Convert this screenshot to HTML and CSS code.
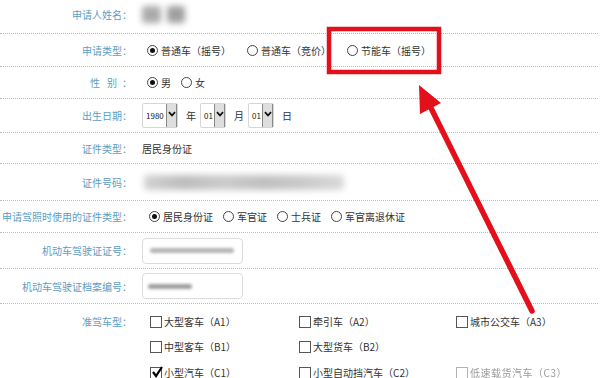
FILE: index.html
```html
<!DOCTYPE html>
<html lang="zh-CN">
<head>
<meta charset="utf-8">
<link rel="stylesheet" href="styles.css">
</head>
<body>
<div class="form">
  <div class="row h1">
    <div class="lbl">申请人姓名：</div>
    <div class="val"><span class="blob b-name1"></span><span class="blob b-name2"></span></div>
  </div>
  <div class="row h2">
    <div class="lbl">申请类型：</div>
    <div class="val radios wide">
      <span class="radio on"><i></i>普通车（摇号）</span>
      <span class="radio"><i></i>普通车（竞价）</span>
      <span class="radio"><i></i>节能车（摇号）</span>
    </div>
  </div>
  <div class="row h3">
    <div class="lbl"><span class="gap">性</span><span class="gap2">别</span>：</div>
    <div class="val radios">
      <span class="radio on"><i></i>男</span>
      <span class="radio"><i></i>女</span>
    </div>
  </div>
  <div class="row h4">
    <div class="lbl">出生日期：</div>
    <div class="val">
      <span class="sel w36"><span class="sv">1980</span><span class="arr"><svg viewBox="0 0 10 8" width="8" height="6"><polyline points="1,1.5 5,6 9,1.5" fill="none" stroke="#111" stroke-width="2.4"/></svg></span></span>
      <span class="unit">年</span>
      <span class="sel w26"><span class="sv">01</span><span class="arr"><svg viewBox="0 0 10 8" width="8" height="6"><polyline points="1,1.5 5,6 9,1.5" fill="none" stroke="#111" stroke-width="2.4"/></svg></span></span>
      <span class="unit">月</span>
      <span class="sel w26"><span class="sv">01</span><span class="arr"><svg viewBox="0 0 10 8" width="8" height="6"><polyline points="1,1.5 5,6 9,1.5" fill="none" stroke="#111" stroke-width="2.4"/></svg></span></span>
      <span class="unit">日</span>
    </div>
  </div>
  <div class="row h5">
    <div class="lbl">证件类型：</div>
    <div class="val">居民身份证</div>
  </div>
  <div class="row h6">
    <div class="lbl">证件号码：</div>
    <div class="val"><span class="blob b-id"></span></div>
  </div>
  <div class="row h7">
    <div class="lbl">申请驾照时使用的证件类型：</div>
    <div class="val radios lic">
      <span class="radio on"><i></i>居民身份证</span>
      <span class="radio"><i></i>军官证</span>
      <span class="radio"><i></i>士兵证</span>
      <span class="radio"><i></i>军官离退休证</span>
    </div>
  </div>
  <div class="row h8">
    <div class="lbl">机动车驾驶证证号：</div>
    <div class="val"><span class="inp"><span class="blob b-in1"></span></span></div>
  </div>
  <div class="row h9">
    <div class="lbl">机动车驾驶证档案编号：</div>
    <div class="val"><span class="inp"><span class="blob b-in2"></span></span></div>
  </div>
  <div class="row last">
    <div class="lbl">准驾车型：</div>
    <div class="val">
      <div class="cbgrid">
        <span class="cb"><i></i>大型客车（A1）</span>
        <span class="cb"><i></i>牵引车（A2）</span>
        <span class="cb"><i></i>城市公交车（A3）</span>
        <span class="cb"><i></i>中型客车（B1）</span>
        <span class="cb"><i></i>大型货车（B2）</span>
        <span class="cb"></span>
        <span class="cb on"><i><svg viewBox="0 0 12 12" width="12" height="12"><polyline points="2,6 5,10 11,1" fill="none" stroke="#000" stroke-width="2.2"/></svg></i>小型汽车（C1）</span>
        <span class="cb"><i></i>小型自动挡汽车（C2）</span>
        <span class="cb faded"><i></i>低速载货汽车（C3）</span>
      </div>
    </div>
  </div>
</div>
<svg class="overlay" width="600" height="378" viewBox="0 0 600 378">
  <rect x="329" y="29" width="110" height="43" fill="none" stroke="#e3101b" stroke-width="4.5"/>
  <line x1="532" y1="311" x2="428" y2="102" stroke="#e3101b" stroke-width="5.5" stroke-linecap="round"/>
  <polygon points="419,85 441,103 420,114" fill="#e3101b"/>
</svg>
</body>
</html>
```

FILE: styles.css
```css
* { box-sizing: border-box; margin: 0; padding: 0; }
html, body { width: 600px; height: 378px; overflow: hidden; background: #fff; }
body {
  font-family: "Noto Sans CJK SC", "Noto Sans", sans-serif;
  font-size: 10px;
  color: #333;
  position: relative;
}
.form { width: 598px; }
.row {
  display: flex;
  align-items: center;
  border-bottom: 1px dotted #bdbdbd;
}
.h1 { height: 34px; padding-bottom: 5px; }
.h2 { height: 33px; }
.h3 { height: 32px; }
.h4 { height: 34px; }
.h5 { height: 31px; }
.h6 { height: 37px; }
.h7 { height: 32px; }
.h8 { height: 36px; }
.h9 { height: 35px; }
.last { align-items: flex-start; border-bottom: none; padding-top: 5px; }
.lbl {
  width: 132px;
  flex: none;
  text-align: right;
  color: #5a9ec4;
  line-height: 25px;
}
.lbl .gap { margin-right: 7px; }
.lbl .gap2 { margin-right: 5px; }
.val {
  padding-left: 10px;
  display: flex;
  align-items: center;
}
.radios { padding-left: 15px; }
.radios.lic { padding-left: 17px; }
.radio {
  display: inline-flex;
  align-items: center;
  margin-right: 10px;
}
.radios.wide .radio { margin-right: 16px; }
.radio i {
  width: 11px;
  height: 11px;
  border: 1px solid #444;
  border-radius: 50%;
  margin-right: 3px;
  position: relative;
  flex: none;
}
.radio.on i::after {
  content: "";
  position: absolute;
  left: 2px;
  top: 2px;
  width: 5px;
  height: 5px;
  background: #111;
  border-radius: 50%;
}
.sel {
  display: inline-flex;
  align-items: stretch;
  height: 25px;
  border: 1px solid #d6d6d6;
  border-radius: 2px;
}
.w36 { width: 36px; }
.w26 { width: 26px; }
.sv {
  flex: 1;
  font-size: 8px;
  line-height: 23px;
  padding-left: 3px;
  color: #222;
}
.arr {
  width: 11px;
  background: #dedede;
  border-left: 1px solid #8a8a8a;
  border-right: 1px solid #8a8a8a;
  display: flex;
  justify-content: center;
  padding-top: 7px;
}
.unit { margin: 0 4px 0 8px; }
.blob {
  display: inline-block;
  filter: blur(3px);
  border-radius: 3px;
}
.b-name1 { width: 19px; height: 17px; background: #ababab; }
.b-name2 { width: 18px; height: 17px; background: #a0a0a0; margin-left: 6px; }
.b-id {
  width: 200px;
  height: 15px;
  background: linear-gradient(90deg, #d2d2d2 0%, #bdbdbd 20%, #cbcbcb 40%, #c0c0c0 60%, #cacaca 80%, #dadada 100%);
  margin-left: 2px;
}
.inp {
  width: 101px;
  height: 26px;
  border: 1px solid #dcdcdc;
  border-radius: 4px;
  display: flex;
  align-items: center;
  padding-left: 7px;
}
.b-in1 { width: 84px; height: 5px; background: #b4b4b4; filter: blur(1.8px); }
.b-in2 { width: 44px; height: 5px; background: #9e9e9e; filter: blur(1.8px); margin-left: -2px; }
.cbgrid {
  display: grid;
  grid-template-columns: 149px 157px 140px;
  grid-auto-rows: 25.5px;
  margin-left: 8px;
}
.cb {
  display: inline-flex;
  align-items: center;
  white-space: nowrap;
  line-height: 1;
}
.cb i {
  width: 12px;
  height: 12px;
  border: 1px solid #555;
  margin-right: 2px;
  position: relative;
  flex: none;
}
.cb.on i svg { position: absolute; left: 0; top: -2px; }
.cb.faded { color: #777; filter: blur(0.5px); opacity: 0.75; letter-spacing: 0.5px; }
.cb.faded i { border-color: #999; }
.overlay { position: absolute; left: 0; top: 0; pointer-events: none; }
```
